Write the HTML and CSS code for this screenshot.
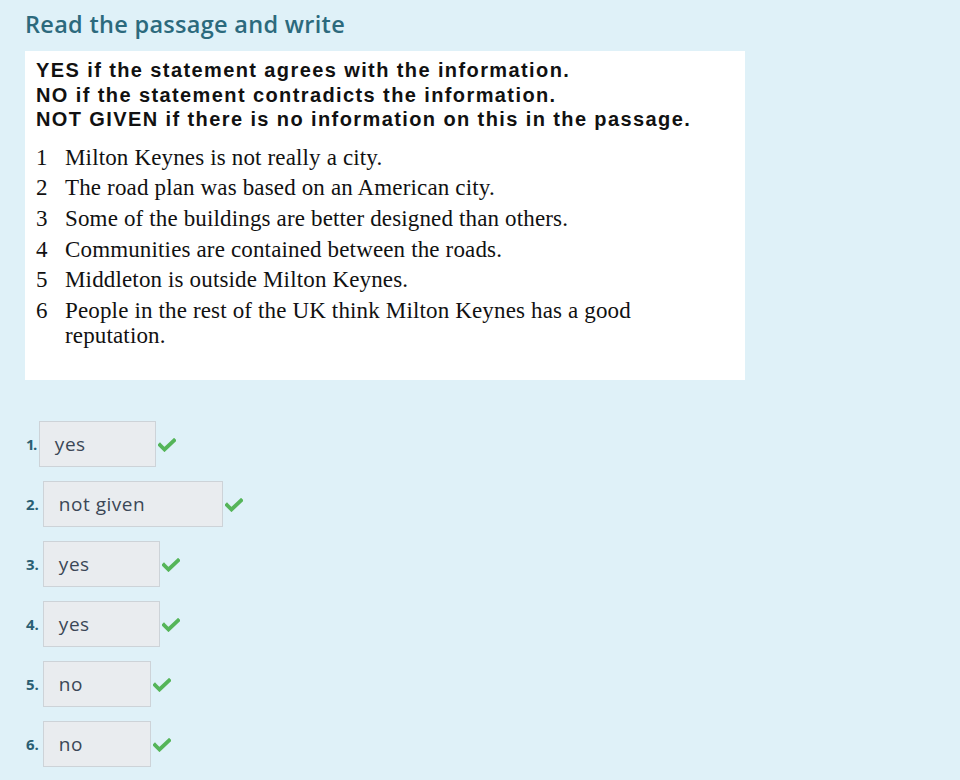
FILE: index.html
```html
<!DOCTYPE html>
<html>
<head>
<meta charset="utf-8">
<link rel="stylesheet" href="styles.css">
</head>
<body>
<div class="page">
  <h1 class="title">Read the passage and write</h1>
  <div class="passage">
    <div class="rules">
      <div>YES if the statement agrees with the information.</div>
      <div>NO if the statement contradicts the information.</div>
      <div>NOT GIVEN if there is no information on this in the passage.</div>
    </div>
    <ol class="items">
      <li><span class="n">1</span><span class="t">Milton Keynes is not really a city.</span></li>
      <li><span class="n">2</span><span class="t">The road plan was based on an American city.</span></li>
      <li><span class="n">3</span><span class="t">Some of the buildings are better designed than others.</span></li>
      <li><span class="n">4</span><span class="t">Communities are contained between the roads.</span></li>
      <li><span class="n">5</span><span class="t">Middleton is outside Milton Keynes.</span></li>
      <li><span class="n">6</span><span class="t">People in the rest of the UK think Milton Keynes has a good<br>reputation.</span></li>
    </ol>
  </div>
  <div class="answers">
    <div class="row"><span class="num one">1.</span><span class="box w1">yes</span><svg class="check" viewBox="0 0 18 14"><path d="M2 7 L6.5 11.5 L16 2.5" /></svg></div>
    <div class="row"><span class="num">2.</span><span class="box w2">not given</span><svg class="check" viewBox="0 0 18 14"><path d="M2 7 L6.5 11.5 L16 2.5" /></svg></div>
    <div class="row"><span class="num">3.</span><span class="box w1">yes</span><svg class="check" viewBox="0 0 18 14"><path d="M2 7 L6.5 11.5 L16 2.5" /></svg></div>
    <div class="row"><span class="num">4.</span><span class="box w1">yes</span><svg class="check" viewBox="0 0 18 14"><path d="M2 7 L6.5 11.5 L16 2.5" /></svg></div>
    <div class="row"><span class="num">5.</span><span class="box w3">no</span><svg class="check" viewBox="0 0 18 14"><path d="M2 7 L6.5 11.5 L16 2.5" /></svg></div>
    <div class="row"><span class="num">6.</span><span class="box w3">no</span><svg class="check" viewBox="0 0 18 14"><path d="M2 7 L6.5 11.5 L16 2.5" /></svg></div>
  </div>
</div>
</body>
</html>
```
FILE: styles.css
```css
html, body {
  margin: 0;
  padding: 0;
  background: #dff1f8;
}
.page {
  padding: 9px 0 0 25px;
}
.title {
  margin: 0;
  font-family: "Open Sans", sans-serif;
  font-weight: 600;
  font-size: 23.5px;
  line-height: 30px;
  color: #2c6a7d;
  letter-spacing: 0.3px;
}
.passage {
  margin-top: 12px;
  width: 720px;
  height: 329px;
  box-sizing: border-box;
  background: #ffffff;
  padding: 7px 0 0 11px;
  color: #111;
}
.rules {
  font-family: "Liberation Sans", sans-serif;
  font-weight: bold;
  font-size: 20px;
  line-height: 24.5px;
  letter-spacing: 1.4px;
}
.items {
  list-style: none;
  margin: 13px 0 0 0;
  padding: 0;
  font-family: "Liberation Serif", serif;
  font-size: 23px;
  line-height: 25px;
  letter-spacing: 0.15px;
}
.items li {
  display: flex;
  margin-bottom: 5.7px;
}
.n {
  width: 29px;
  flex: none;
}
.answers {
  margin-top: 41px;
  display: flex;
  flex-direction: column;
  gap: 14px;
}
.row {
  display: flex;
  align-items: center;
  height: 46px;
}
.num {
  font-family: "Open Sans", sans-serif;
  font-weight: 700;
  font-size: 15px;
  color: #2b5f73;
  margin-left: 1px;
  margin-right: 4px;
}
.num.one {
  letter-spacing: -1.5px;
  margin-right: 3px;
}
.box {
  box-sizing: border-box;
  height: 46px;
  border: 1px solid #cdd3d8;
  background: #e9ecef;
  font-family: "Open Sans", sans-serif;
  font-size: 19px;
  letter-spacing: 0.5px;
  color: #3b4756;
  padding-left: 15px;
  display: flex;
  align-items: center;
}
.w1 { width: 117px; }
.w2 { width: 180px; }
.w3 { width: 108px; }
.check {
  width: 18px;
  height: 14px;
  margin-left: 2px;
  margin-top: 1px;
  fill: none;
  stroke: #55b559;
  stroke-width: 3.8;
  stroke-linecap: square;
}
```
